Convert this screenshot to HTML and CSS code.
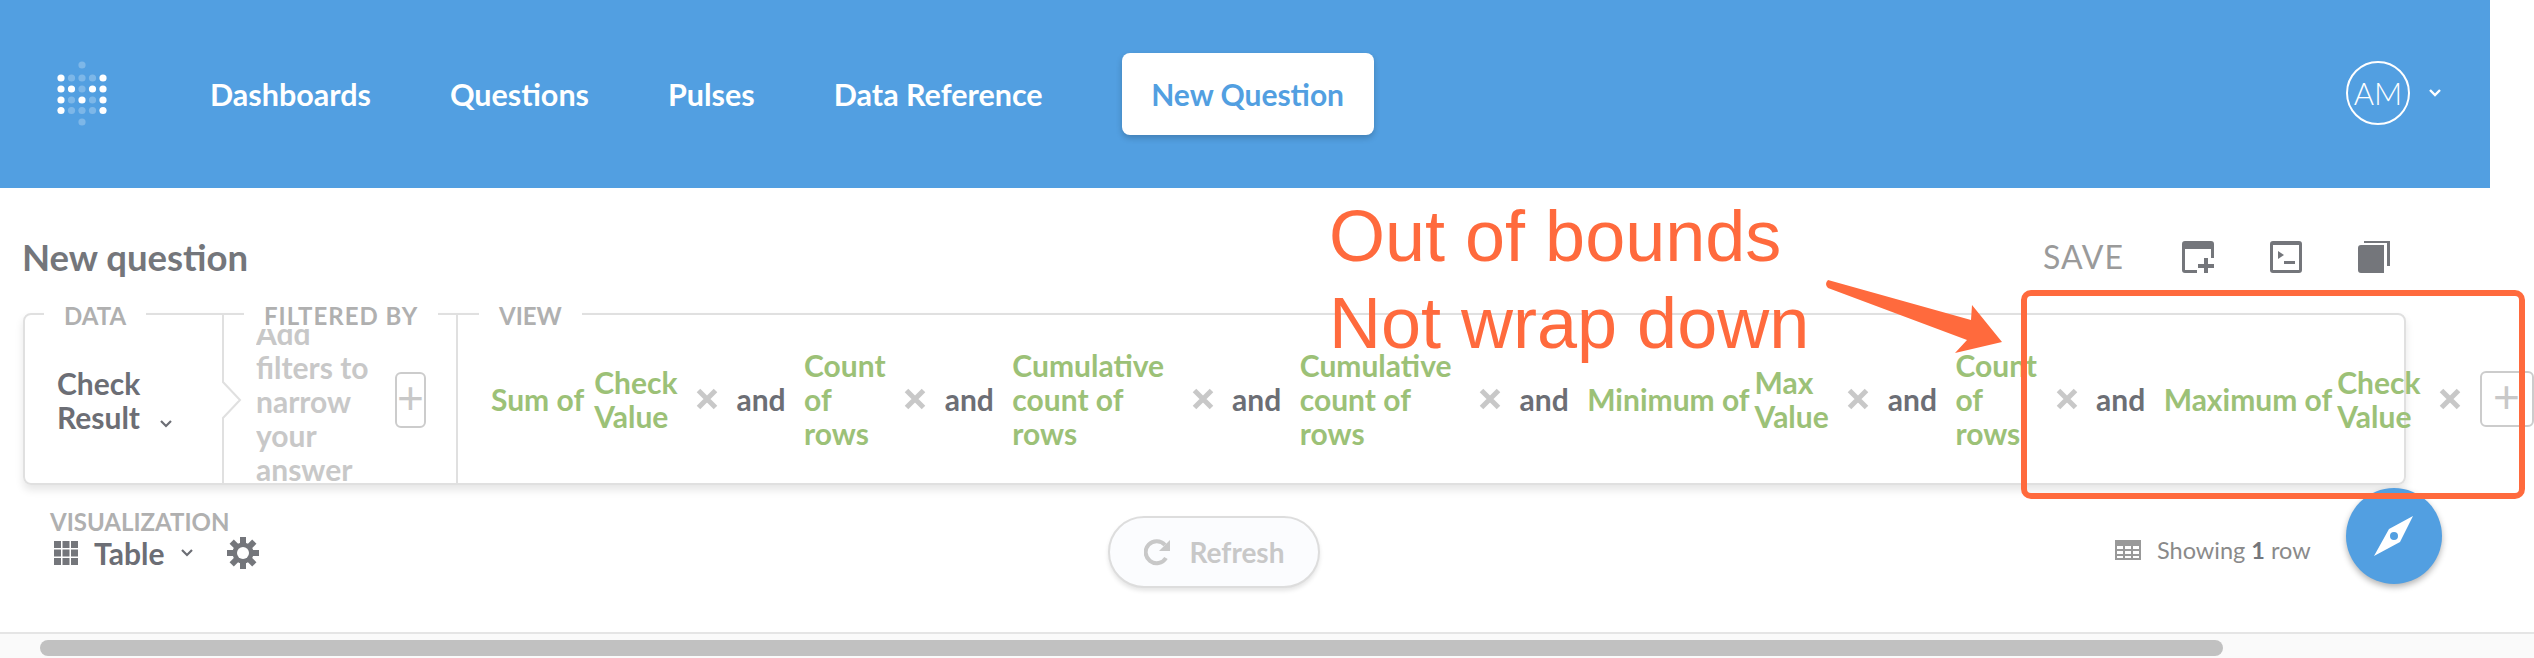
FILE: index.html
```html
<!DOCTYPE html>
<html lang="en">
<head>
    <meta charset="UTF-8">
    <title>New question</title>
    <link rel="stylesheet" href="styles.css">
</head>
<body>
    <svg class="icon-defs" width="0" height="0">
        <symbol id="x" viewBox="0 0 22 22"><path d="M2.500 2.500l17 17M19.500 2.500l-17 17" fill="none" stroke="#c8c8c8" stroke-width="5"/></symbol>
    </svg>
    <div class="app">
        <header class="navbar">
            <svg class="logo" width="50" height="66" viewBox="0 0 50 66">
                <g fill="#fff" opacity="0.25">
                    <circle cx="25" cy="4" r="3.6"/><circle cx="14.500" cy="17" r="3.6"/><circle cx="25" cy="17" r="3.6"/><circle cx="35.500" cy="17" r="3.6"/>
                    <circle cx="25" cy="28" r="3.6"/><circle cx="14.500" cy="39" r="3.6"/><circle cx="35.500" cy="39" r="3.6"/>
                    <circle cx="14.500" cy="49.500" r="3.6"/><circle cx="25" cy="49.500" r="3.6"/><circle cx="35.500" cy="49.500" r="3.6"/><circle cx="25" cy="61" r="3.6"/>
                </g>
                <g fill="#fff">
                    <circle cx="4" cy="17" r="3.6"/><circle cx="46" cy="17" r="3.6"/>
                    <circle cx="4" cy="28" r="3.6"/><circle cx="14.500" cy="28" r="3.6"/><circle cx="35.500" cy="28" r="3.6"/><circle cx="46" cy="28" r="3.6"/>
                    <circle cx="4" cy="39" r="3.6"/><circle cx="25" cy="39" r="3.6"/><circle cx="46" cy="39" r="3.6"/>
                    <circle cx="4" cy="49.500" r="3.6"/><circle cx="46" cy="49.500" r="3.6"/>
                </g>
            </svg>
            <nav class="nav-links">
                <a>Dashboards</a>
                <a>Questions</a>
                <a>Pulses</a>
                <a>Data Reference</a>
            </nav>
            <a class="new-question">New Question</a>
            <div class="profile">
                <span class="avatar">AM</span>
                <svg width="14" height="10" viewBox="0 0 14 10"><path d="M2 2l5 5 5-5" fill="none" stroke="#fff" stroke-width="2.4"/></svg>
            </div>
        </header>

        <main>
            <div class="title-row">
                <h1>New question</h1>
                <div class="actions">
                    <span class="save">SAVE</span>
                    <svg width="32" height="32" viewBox="0 0 32 32"><path fill="#74767b" d="M3 0h26a3 3 0 0 1 3 3v14h-3V8H3v21h12v3H3a3 3 0 0 1-3-3V3a3 3 0 0 1 3-3zM22 17h4v6h6v4h-6v5h-4v-5h-6v-4h6z"/></svg>
                    <svg width="32" height="32" viewBox="0 0 32 32"><path fill="#74767b" fill-rule="evenodd" d="M3 0h26a3 3 0 0 1 3 3v26a3 3 0 0 1-3 3H3a3 3 0 0 1-3-3V3a3 3 0 0 1 3-3zM3 4v25h26V4zM8 10l6 4-6 4zM14 20h11v3H14z"/></svg>
                    <svg width="32" height="32" viewBox="0 0 32 32"><path fill="#74767b" d="M3 4h23v28H3a3 3 0 0 1-3-3V7a3 3 0 0 1 3-3zM6 0h26v25h-3V2H6z"/></svg>
                </div>
            </div>

            <section class="query-card">
                <div class="section section-data">
                    <span class="section-label">DATA</span>
                    <div class="data-picker">Check<br>Result
                        <svg class="chevron" width="14" height="10" viewBox="0 0 14 10"><path d="M2 2l5 5 5-5" fill="none" stroke="#6c6e75" stroke-width="2.2"/></svg>
                    </div>
                    <svg class="section-arrow" width="20" height="172" viewBox="0 0 20 172"><path d="M1 0v69l17 18-17 18v67" fill="#fff" stroke="#e0e0e0" stroke-width="2"/></svg>
                </div>
                <div class="section section-filter">
                    <span class="section-label filter-label">FILTERED BY</span>
                    <div class="filter-text"><span>Add<br>filters to<br>narrow<br>your<br>answer</span></div>
                    <button class="add-btn add-narrow">+</button>
                </div>
                <div class="section section-view">
                    <span class="section-label">VIEW</span>
                    <div class="clause"><span>Sum of</span><span>Check<br>Value</span></div>
                    <svg class="remove"><use href="#x"/></svg><span class="and">and</span>
                    <div class="clause"><span>Count<br>of<br>rows</span></div>
                    <svg class="remove"><use href="#x"/></svg><span class="and">and</span>
                    <div class="clause clause-wide"><span>Cumulative<br>count of<br>rows</span></div>
                    <svg class="remove"><use href="#x"/></svg><span class="and">and</span>
                    <div class="clause clause-wide"><span>Cumulative<br>count of<br>rows</span></div>
                    <svg class="remove"><use href="#x"/></svg><span class="and">and</span>
                    <div class="clause clause-tight"><span>Minimum of</span><span>Max<br>Value</span></div>
                    <svg class="remove"><use href="#x"/></svg><span class="and">and</span>
                    <div class="clause"><span>Count<br>of<br>rows</span></div>
                    <svg class="remove"><use href="#x"/></svg><span class="and">and</span>
                    <div class="clause clause-tight"><span>Maximum of</span><span>Check<br>Value</span></div>
                    <svg class="remove"><use href="#x"/></svg>
                    <button class="add-btn">+</button>
                </div>
            </section>

            <div class="footer-row">
                <div class="viz">
                    <div class="viz-label">VISUALIZATION</div>
                    <div class="viz-picker">
                        <svg width="24" height="24" viewBox="0 0 24 24"><path fill="#74767b" d="M0 0h7v7H0zM8.500 0h7v7h-7zM17 0h7v7h-7zM0 8.500h7v7H0zM8.500 8.500h7v7h-7zM17 8.500h7v7h-7zM0 17h7v7H0zM8.500 17h7v7h-7zM17 17h7v7h-7z"/></svg>
                        <span class="viz-name">Table</span>
                        <svg width="14" height="10" viewBox="0 0 14 10"><path d="M2 2l5 5 5-5" fill="none" stroke="#6c6e75" stroke-width="2.2"/></svg>
                        <svg class="gear" width="32" height="32" viewBox="0 0 32 32">
                            <g fill="#74767b">
                                <rect x="13" y="0" width="6" height="32"/>
                                <rect x="13" y="0" width="6" height="32" transform="rotate(45 16 16)"/>
                                <rect x="13" y="0" width="6" height="32" transform="rotate(90 16 16)"/>
                                <rect x="13" y="0" width="6" height="32" transform="rotate(135 16 16)"/>
                            </g>
                            <circle cx="16" cy="16" r="10.500" fill="#74767b"/>
                            <circle cx="16" cy="16" r="6" fill="#fff"/>
                        </svg>
                    </div>
                </div>
                <button class="refresh">
                    <svg width="28" height="28" viewBox="0 0 28 28"><path d="M22 20a11 11 0 1 1-1-13" fill="none" stroke="#c8c8c8" stroke-width="4"/><path d="M26 2v11H15z" fill="#c8c8c8"/></svg>
                    Refresh
                </button>
                <div class="row-count">
                    <svg width="26" height="20" viewBox="0 0 26 20"><path fill="#999" fill-rule="evenodd" d="M0 0h26v20H0zM2 6v3h6V6zm8 0v3h6V6zm8 0v3h6V6zM2 11v3h6v-3zm8 0v3h6v-3zm8 0v3h6v-3zM2 16v2h6v-2zm8 0v2h6v-2zm8 0v2h6v-2z"/></svg>
                    <span>Showing <b>1</b> row</span>
                </div>
            </div>
        </main>
    </div>

    <button class="fab">
        <svg width="44" height="44" viewBox="0 0 44 44"><path fill="#fff" fill-rule="evenodd" d="M41 2L28 28 2 42 17 15zM22 18a4 4 0 1 0 0 8 4 4 0 0 0 0-8z"/></svg>
    </button>

    <div class="annotation annotation-one">Out of bounds</div>
    <div class="annotation annotation-two">Not wrap down</div>
    <svg class="annotation-arrow" width="200" height="90" viewBox="0 0 200 90"><path fill="#ff6a3d" d="M3 1L146 41 147 26 177 63 130 74 142 61 3 9Q-1 5 3 1z"/></svg>
    <div class="annotation-box"></div>

    <div class="h-scroll"><div class="h-thumb"></div></div>
</body>
</html>
```

FILE: styles.css
```css
* {
    box-sizing: border-box;
}
html, body {
    height: 100%;
}
body {
    margin: 0;
    position: relative;
    overflow: hidden;
    background: #fff;
    font-family: Lato, "Noto Sans", sans-serif;
    font-weight: 700;
    color: #6c6e75;
}
.icon-defs {
    display: block;
}
.app {
    width: 2490px;
}

/* top bar */
.navbar {
    height: 188px;
    background: #529fe1;
    display: flex;
    align-items: center;
    padding-left: 57px;
    padding-right: 48px;
    color: #fff;
}
.logo {
    flex: none;
}
.nav-links {
    display: flex;
    gap: 79px;
    margin-left: 103px;
    font-size: 30.5px;
}
.new-question {
    margin-left: 79px;
    width: 252px;
    height: 82px;
    display: flex;
    align-items: center;
    justify-content: center;
    background: #fff;
    color: #529fe1;
    font-size: 30px;
    border-radius: 8px;
    box-shadow: 0 3px 6px rgba(0, 0, 0, 0.2);
}
.profile {
    margin-left: auto;
    display: flex;
    align-items: center;
    gap: 18px;
    margin-top: -2px;
}
.avatar {
    width: 64px;
    height: 64px;
    border: 2px solid #fff;
    border-radius: 50%;
    display: flex;
    align-items: center;
    justify-content: center;
    font-size: 31px;
    font-weight: 300;
}

/* title */
.title-row {
    height: 125px;
    display: flex;
    align-items: center;
    justify-content: space-between;
    padding-left: 22px;
    padding-right: 100px;
    padding-top: 12px;
}
h1 {
    margin: 0;
    font-size: 36.5px;
    font-weight: 700;
    color: #74767b;
}
.actions {
    display: flex;
    align-items: center;
    gap: 56px;
}
.save {
    font-size: 32px;
    font-weight: 400;
    letter-spacing: 1px;
    color: #9a9a9a;
    margin-right: 2px;
}

/* query card */
.query-card {
    margin-left: 23px;
    width: 2383px;
    height: 172px;
    display: flex;
    border: 2px solid #e0e0e0;
    border-radius: 8px;
    box-shadow: 0 5px 8px rgba(0, 0, 0, 0.1);
    font-size: 30px;
    line-height: 34px;
}
.section {
    position: relative;
    display: flex;
    align-items: center;
    flex: none;
}
.section-label {
    position: absolute;
    top: -12px;
    padding: 0 20px;
    background: #fff;
    font-size: 24px;
    line-height: 26px;
    color: #b0b0b0;
}
.filter-label {
    letter-spacing: 1px;
}
.section-data {
    width: 198px;
    padding-left: 32px;
}
.section-data .section-label {
    left: 19px;
}
.data-picker {
    margin-top: 2px;
}
.chevron {
    margin-left: 12px;
}
.section-arrow {
    position: absolute;
    left: 197px;
    top: -2px;
}
.section-filter {
    width: 235px;
    padding-left: 33px;
    border-right: 2px solid #e0e0e0;
    gap: 14px;
}
.section-filter .section-label {
    left: 21px;
}
.filter-text {
    width: 125px;
    height: 156px;
    margin-top: 12px;
    overflow: hidden;
    display: flex;
    align-items: center;
    color: #c8c8c8;
}
.filter-text span {
    flex: none;
    margin-top: -8px;
}
.section-view {
    padding-left: 33px;
    gap: 18.5px;
}
.section-view .section-label {
    left: 21px;
}
.clause {
    display: flex;
    align-items: center;
    gap: 10px;
    color: #9cc177;
    white-space: nowrap;
}
.clause-wide {
    padding-right: 9px;
}
.clause-tight {
    gap: 5px;
}
.remove {
    flex: none;
    width: 22px;
    height: 22px;
}
.add-btn {
    width: 54px;
    height: 56px;
    padding: 0 0 4px;
    background: #fff;
    border: 2px solid #ccc;
    border-radius: 6px;
    color: #c8c8c8;
    font-family: "Liberation Sans", sans-serif;
    font-size: 46px;
    font-weight: 400;
    line-height: 1;
}
.add-narrow {
    width: 31px;
    flex: none;
    margin-top: 2px;
}

/* below the card */
.footer-row {
    display: flex;
    align-items: flex-start;
    padding-left: 50px;
    padding-top: 24px;
}
.viz {
    width: 1058px;
}
.viz-label {
    font-size: 24px;
    line-height: 26px;
    color: #b0b0b0;
}
.viz-picker {
    display: flex;
    align-items: center;
    margin-top: 0;
    margin-left: 4px;
    font-size: 30px;
}
.viz-name {
    margin-left: 16px;
    margin-right: 16px;
}
.gear {
    margin-left: 33px;
}
.refresh {
    width: 212px;
    height: 72px;
    margin-top: 7px;
    display: flex;
    align-items: center;
    justify-content: center;
    gap: 18px;
    background: #fbfcfe;
    border: 2px solid #ddd;
    border-radius: 36px;
    box-shadow: 0 3px 4px rgba(0, 0, 0, 0.1);
    color: #c8c8c8;
    font-family: inherit;
    font-size: 28px;
    font-weight: 700;
}
.row-count {
    margin-left: 795px;
    margin-top: 27px;
    display: flex;
    align-items: center;
    gap: 16px;
    font-size: 23.5px;
    font-weight: 400;
    color: #8a8a8a;
    white-space: nowrap;
}
.row-count b {
    color: #74767b;
}

/* things floating over the page */
.fab {
    position: absolute;
    left: 2346px;
    top: 488px;
    width: 96px;
    height: 96px;
    padding: 0;
    display: flex;
    align-items: center;
    justify-content: center;
    border: none;
    border-radius: 50%;
    background: #529fe1;
    box-shadow: 0 3px 6px rgba(0, 0, 0, 0.3);
}
.annotation {
    position: absolute;
    left: 1329px;
    font-family: "Liberation Sans", sans-serif;
    font-weight: 400;
    font-size: 72px;
    line-height: 80px;
    color: #ff6a3d;
    white-space: nowrap;
}
.annotation-one {
    top: 196px;
}
.annotation-two {
    top: 283px;
}
.annotation-arrow {
    position: absolute;
    left: 1825px;
    top: 279px;
}
.annotation-box {
    position: absolute;
    left: 2021px;
    top: 290px;
    width: 504px;
    height: 209px;
    border: 6px solid #ff6a3d;
    border-radius: 10px;
}
.h-scroll {
    position: absolute;
    left: 0;
    right: 0;
    bottom: 0;
    height: 26px;
    background: #fafafa;
    border-top: 2px solid #e5e5e5;
}
.h-thumb {
    position: absolute;
    left: 40px;
    top: 6px;
    width: 2183px;
    height: 16px;
    background: #c1c1c1;
    border-radius: 8px;
}
```
